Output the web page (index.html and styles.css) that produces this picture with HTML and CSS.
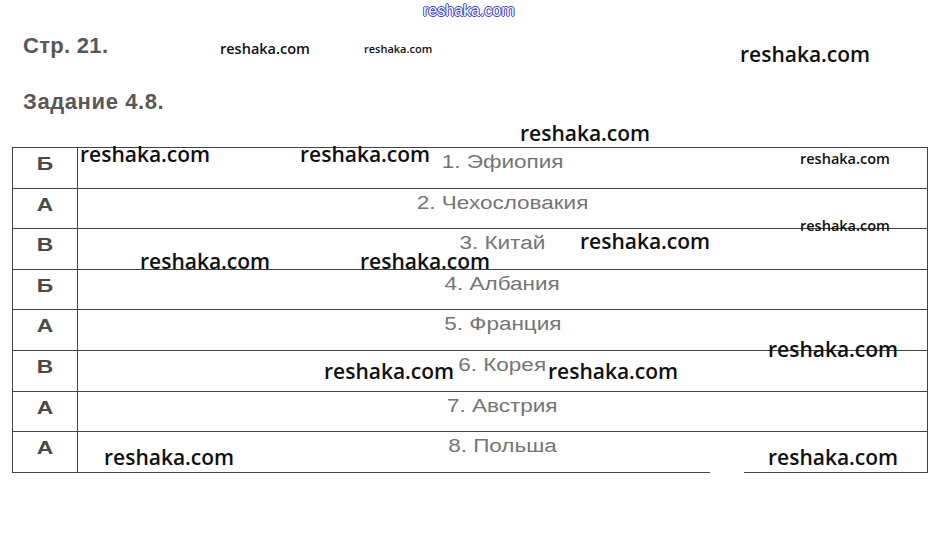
FILE: index.html
```html
<!DOCTYPE html>
<html lang="ru">
<head>
    <meta charset="UTF-8">
    <title>Стр. 21. Задание 4.8.</title>
    <link rel="stylesheet" href="styles.css">
</head>
<body>
    <div class="page">
        <h1 class="title">Стр. 21.</h1>
        <h2 class="task">Задание 4.8.</h2>

        <div class="answers">
            <div class="letter"><span>Б</span></div><div class="country"><span>1. Эфиопия</span></div>
            <div class="letter"><span>А</span></div><div class="country"><span>2. Чехословакия</span></div>
            <div class="letter"><span>В</span></div><div class="country"><span>3. Китай</span></div>
            <div class="letter"><span>Б</span></div><div class="country"><span>4. Албания</span></div>
            <div class="letter"><span>А</span></div><div class="country"><span>5. Франция</span></div>
            <div class="letter"><span>В</span></div><div class="country"><span>6. Корея</span></div>
            <div class="letter"><span>А</span></div><div class="country"><span>7. Австрия</span></div>
            <div class="letter"><span>А</span></div><div class="country"><span>8. Польша</span></div>
        </div>

        <!-- водяные знаки поверх страницы -->
        <span class="mark mark-blue" style="left: 423px; top: 3px;">reshaka.com</span>
        <span class="mark mark-small" style="left: 220px; top: 42px;">reshaka.com</span>
        <span class="mark mark-tiny" style="left: 364px; top: 43px;">reshaka.com</span>
        <span class="mark" style="left: 740px; top: 44px;">reshaka.com</span>
        <span class="mark" style="left: 520px; top: 123px;">reshaka.com</span>
        <span class="mark" style="left: 80px; top: 144px;">reshaka.com</span>
        <span class="mark" style="left: 300px; top: 144px;">reshaka.com</span>
        <span class="mark mark-small" style="left: 800px; top: 152px;">reshaka.com</span>
        <span class="mark mark-small" style="left: 800px; top: 219px;">reshaka.com</span>
        <span class="mark" style="left: 580px; top: 231px;">reshaka.com</span>
        <span class="mark" style="left: 140px; top: 251px;">reshaka.com</span>
        <span class="mark" style="left: 360px; top: 251px;">reshaka.com</span>
        <span class="mark" style="left: 768px; top: 339px;">reshaka.com</span>
        <span class="mark" style="left: 324px; top: 361px;">reshaka.com</span>
        <span class="mark" style="left: 548px; top: 361px;">reshaka.com</span>
        <span class="mark" style="left: 104px; top: 447px;">reshaka.com</span>
        <span class="mark" style="left: 768px; top: 447px;">reshaka.com</span>
        <div class="patch"></div>
    </div>
</body>
</html>
```

FILE: styles.css
```css
body {
    margin: 0;
    background-color: white;
    font-family: 'Liberation Sans', Arial, sans-serif;
}
.page {
    position: relative;
    width: 938px;
    height: 547px;
    padding-top: 33px;
    box-sizing: border-box;
    overflow: hidden;
}
.title,
.task {
    margin: 0 0 31px 23px;
    font-size: 22px;
    line-height: 25px;
    font-weight: bold;
    color: #585858;
    letter-spacing: 0.3px;
}
.task {
    margin-bottom: 33px;
    letter-spacing: 0.6px;
}
.answers {
    display: grid;
    grid-template-columns: 65px 850px;
    margin-left: 12px;
    border-top: 1px solid #444;
    border-left: 1px solid #444;
    width: 916px;
    box-sizing: border-box;
}
.letter,
.country {
    height: 40.6px;
    box-sizing: border-box;
    border-right: 1px solid #444;
    border-bottom: 1px solid #444;
    text-align: center;
}
.letter {
    padding-top: 5px;
    font-size: 19px;
    font-weight: bold;
    color: #4a4a4a;
}
.country {
    padding-top: 4px;
    font-size: 18px;
    color: #757575;
}
.letter span,
.country span {
    display: inline-block;
    transform: scaleX(1.2);
}
.country span {
    transform: scaleX(1.25);
}
.mark {
    position: absolute;
    font-family: 'Open Sans', sans-serif;
    font-weight: 600;
    font-size: 21px;
    line-height: 1;
    color: #111;
    white-space: nowrap;
}
.mark-small {
    font-size: 14.5px;
}
.mark-tiny {
    font-size: 11px;
}
.mark-blue {
    font-family: 'Liberation Sans', Arial, sans-serif;
    font-weight: normal;
    font-size: 16px;
    color: white;
    text-shadow: 1px 0 #3a3ad0, -1px 0 #3a3ad0, 0 1px #3a3ad0, 0 -1px #3a3ad0;
}
.patch {
    position: absolute;
    left: 710px;
    top: 468px;
    width: 34px;
    height: 8px;
    background-color: white;
}
```
